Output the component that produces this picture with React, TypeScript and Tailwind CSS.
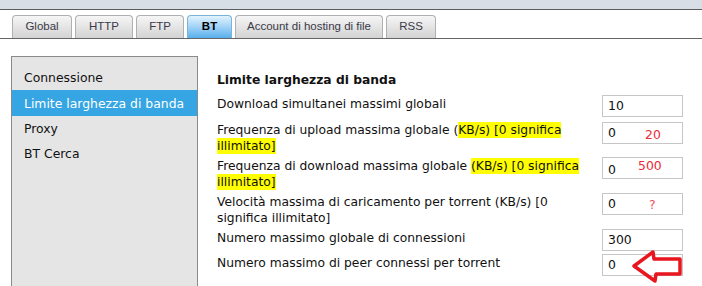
import React from 'react';

const tabs = [
  { label: 'Global', w: 'w-[60px]' },
  { label: 'HTTP', w: 'w-[58px]' },
  { label: 'FTP', w: 'w-[48px]' },
  { label: 'BT', w: 'w-[45px]', active: true },
  { label: 'Account di hosting di file', w: 'w-[148px]' },
  { label: 'RSS', w: 'w-[50px]' },
];

const menu = ['Connessione', 'Limite larghezza di banda', 'Proxy', 'BT Cerca'];

function Hl({ children }: { children: React.ReactNode }) {
  return <span className="bg-[#ffff00] py-[1px]">{children}</span>;
}

function Field({ value, children }: { value: string; children?: React.ReactNode }) {
  return (
    <div className="relative flex h-[22px] w-[81px] shrink-0 items-center border border-[#c6c6c6] bg-white pl-[5px] text-[12.4px] text-[#111]">
      {value}
      {children}
    </div>
  );
}

export default function App() {
  return (
    <div className="h-[286px] w-[702px] overflow-hidden bg-white font-['DejaVu_Sans',sans-serif] text-[#111]">
      <div className="h-[10px] border-b border-[#5c5c5c] bg-[#d8dee6]" />

      {/* Tabs */}
      <div className="flex items-end gap-[3px] border-b border-[#666] pl-[12px] pt-[5px]">
        {tabs.map((t) => (
          <div
            key={t.label}
            className={
              t.active
                ? `${t.w} flex h-[23px] items-center justify-center rounded-t-[4px] border border-b-0 border-[#7ab4d8] bg-gradient-to-b from-[#e2f3fd] to-[#56b0ec] text-[11.5px] font-bold text-black font-['Liberation_Sans',sans-serif]`
                : `${t.w} flex h-[23px] items-center justify-center rounded-t-[4px] border border-b-0 border-[#b0b0b0] bg-gradient-to-b from-[#f6f6f6] to-[#d3d3d3] text-[11.5px] text-[#3a3a48] font-['Liberation_Sans',sans-serif]`
            }
          >
            {t.label}
          </div>
        ))}
      </div>

      <div className="flex pl-[11px] pt-[17px]">
        {/* Sidebar */}
        <div className="h-[260px] w-[187px] shrink-0 border border-[#8a8a8a] bg-[#e5e5e5] pt-[8px] text-[12.4px]">
          {menu.map((m, i) => (
            <div
              key={m}
              className={
                i === 1
                  ? 'flex h-[26px] items-center bg-[#35a5e4] pl-[12px] pt-[2px] text-white'
                  : 'flex h-[25px] items-center pl-[12px] pt-[2px]'
              }
            >
              {m}
            </div>
          ))}
        </div>

        {/* Content */}
        <div className="ml-[19px] flex flex-col pt-[16px] text-[12.3px] leading-[16px]">
          <div className="mb-[7px] font-bold">Limite larghezza di banda</div>

          <div className="flex flex-col gap-[4px]">
            <div className="flex items-start">
              <div className="mt-[1px] w-[385px]">Download simultanei massimi globali</div>
              <Field value="10" />
            </div>

            <div className="mt-[1px] flex items-start">
              <div className="w-[385px]">
                Frequenza di upload massima globale (<Hl>KB/s) [0 significa</Hl>
                <br />
                <Hl>illimitato]</Hl>
              </div>
              <Field value="0">
                <span className="absolute left-[42px] top-[4px] text-[12.4px] text-[#ee2a36]">20</span>
              </Field>
            </div>

            <div className="flex items-start">
              <div className="w-[385px]">
                Frequenza di download massima globale <Hl>(KB/s) [0 significa</Hl>
                <br />
                <Hl>illimitato]</Hl>
              </div>
              <div className="mt-[-1px]">
                <Field value="">
                  <span className="absolute left-[5px] top-[4px]">0</span>
                  <span className="absolute left-[35px] top-[0px] text-[12.4px] text-[#ee2a36]">500</span>
                </Field>
              </div>
            </div>

            <div className="flex items-start">
              <div className="w-[385px]">
                Velocità massima di caricamento per torrent (KB/s) [0
                <br />
                significa illimitato]
              </div>
              <div className="mt-[-1px]">
                <Field value="0">
                  <span className="absolute left-[46px] top-[3px] text-[12.4px] text-[#f0505a]">?</span>
                </Field>
              </div>
            </div>

            <div className="flex items-start">
              <div className="w-[385px]">Numero massimo globale di connessioni</div>
              <div className="mt-[-1px]">
                <Field value="300" />
              </div>
            </div>

            <div className="flex items-start">
              <div className="w-[385px]">Numero massimo di peer connessi per torrent</div>
              <div className="mt-[-1px]">
                <Field value="0">
                  <svg
                    className="absolute left-[25px] top-[-6px]"
                    width="54"
                    height="36"
                    viewBox="0 0 54 36"
                  >
                    <polygon
                      points="6,17 25,3 26,10 52,10 52,25 28,25 27,32"
                      fill="none"
                      stroke="#e8161e"
                      strokeWidth="3.5"
                      strokeLinejoin="round"
                    />
                  </svg>
                </Field>
              </div>
            </div>
          </div>
        </div>
      </div>
    </div>
  );
}
